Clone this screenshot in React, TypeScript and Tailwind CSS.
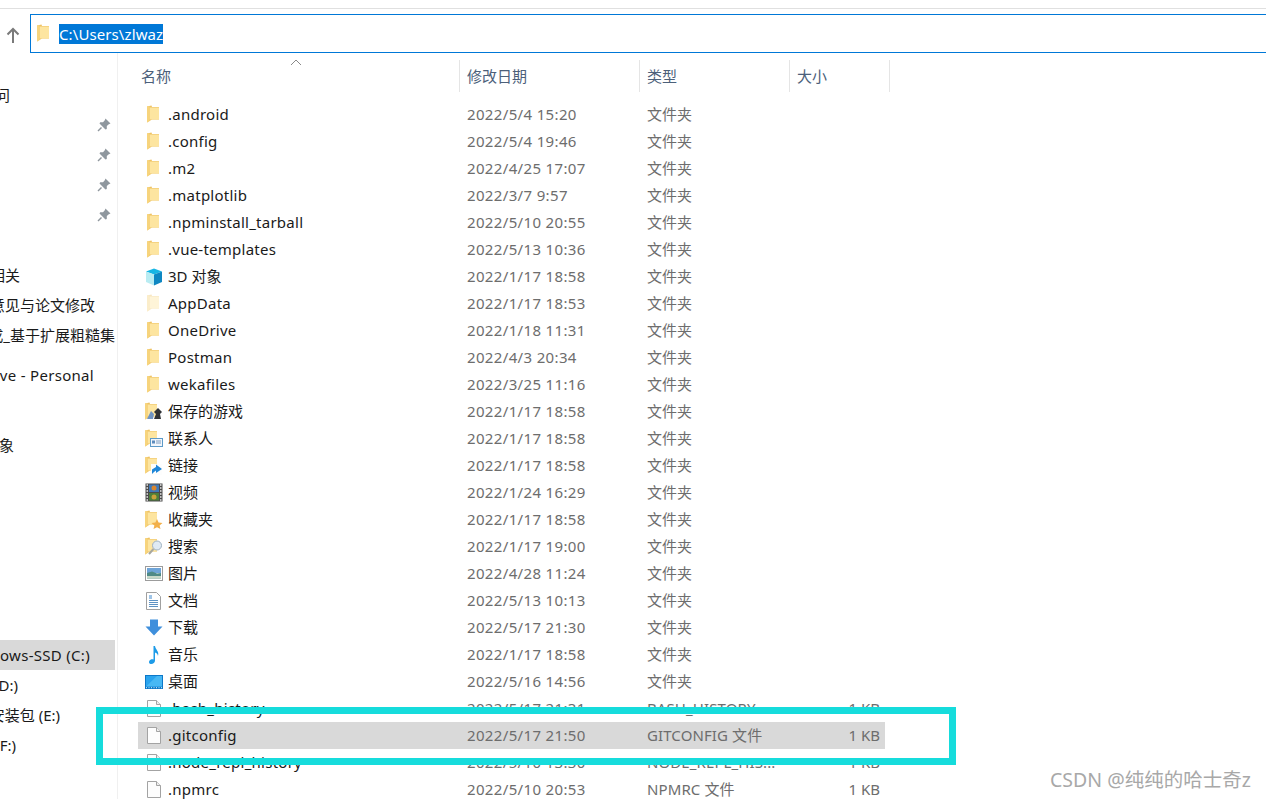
import React from 'react';

const FONT = "font-['Noto_Sans','Noto_Sans_CJK_SC',sans-serif]";

const Folder: React.FC<{ faded?: boolean }> = ({ faded }) => (
  <svg width="14" height="18" viewBox="1 0 14 18" className={`-mt-[1px] ${faded ? 'opacity-40' : ''}`}>
    <path d="M1 1.5 L5.5 0.5 L6 2 L13 2 L13 14.5 L6 14.5 L1 17.5 Z" fill="#eec263" />
    <path d="M3.5 2.5 L13 2.5 L13 14.5 L3.5 14.5 Z" fill="#fde5a0" />
    <path d="M1 1.5 L3.5 1 L3.5 16 L1 17.5 Z" fill="#f7d47c" />
  </svg>
);

const Overlay: React.FC<{ children: React.ReactNode }> = ({ children }) => (
  <span className="relative block w-[18px] h-[18px]">
    <span className="absolute left-0 top-0">
      <Folder />
    </span>
    <svg width="18" height="18" viewBox="0 0 18 18" className="absolute left-0 top-0">
      {children}
    </svg>
  </span>
);

const FileIcon = () => (
  <svg width="16" height="19" viewBox="0 0 16 19">
    <path d="M1.5 1.5 H10.5 L14.5 5.5 V17.5 H1.5 Z" fill="#fdfdfd" stroke="#a3a3a3" />
    <path d="M10.5 1.5 V5.5 H14.5" fill="#eee" stroke="#a3a3a3" />
  </svg>
);

const Icons: Record<string, React.ReactNode> = {
  folder: <Folder />,
  faded: <Folder faded />,
  file: <FileIcon />,
  cube: (
    <svg width="18" height="18" viewBox="0 0 18 18">
      <path d="M9 0.5 L17 3.5 L9 6.5 L1 3.5 Z" fill="#17b6e4" />
      <path d="M1 3.5 L9 6.5 V17.5 L1 14 Z" fill="#b9ecf2" />
      <path d="M9 6.5 L17 3.5 V14 L9 17.5 Z" fill="#0e87c2" />
    </svg>
  ),
  game: (
    <Overlay>
      <path d="M6 8 L2 16 H8 L9 11 Z" fill="#6f94c4" />
      <path d="M13 5 L17 9 L15 11 L16 16 H9 L11 11 L9 9 Z" fill="#2f3236" />
    </Overlay>
  ),
  contact: (
    <Overlay>
      <rect x="5.5" y="8.5" width="12" height="8" fill="#f2f6fb" stroke="#5d9ac8" />
      <rect x="7" y="10.5" width="3" height="3" fill="#5d8bbd" />
      <path d="M11 11 H16 M11 13 H16" stroke="#7d9cc0" />
    </Overlay>
  ),
  link: (
    <Overlay>
      <rect x="6" y="7" width="11" height="11" fill="#fdfdfd" />
      <path d="M7 17 V12.5 L11 10 V7.5 L17 12 L11 16 V13.5 L9 15 Z" fill="#1e86d8" />
    </Overlay>
  ),
  film: (
    <svg width="18" height="19" viewBox="0 0 18 19">
      <rect x="0.5" y="0.5" width="17" height="18" fill="#4a4a4a" />
      <rect x="4" y="1.5" width="10" height="7.5" fill="#3f78b8" />
      <rect x="4" y="10" width="10" height="7.5" fill="#4d7e3a" />
      <circle cx="9" cy="5" r="2.5" fill="#d9862e" />
      <circle cx="9" cy="14" r="2.5" fill="#c9a13a" />
      <path
        d="M1.5 2 H3 M1.5 5 H3 M1.5 8 H3 M1.5 11 H3 M1.5 14 H3 M1.5 17 H3 M15 2 H16.5 M15 5 H16.5 M15 8 H16.5 M15 11 H16.5 M15 14 H16.5 M15 17 H16.5"
        stroke="#e8e8e8"
        strokeWidth="1.5"
      />
    </svg>
  ),
  star: (
    <Overlay>
      <path
        d="M12 8 L13.6 11.6 L17.5 12 L14.6 14.5 L15.5 18 L12 16.2 L8.5 18 L9.4 14.5 L6.5 12 L10.4 11.6 Z"
        fill="#f2b04a"
      />
    </Overlay>
  ),
  search: (
    <Overlay>
      <circle cx="12" cy="7.5" r="4.5" fill="#dfeaf3" stroke="#9fb2c2" />
      <path d="M8.5 11 L4 16" stroke="#a8a8a0" strokeWidth="2" />
    </Overlay>
  ),
  picture: (
    <svg width="18" height="15" viewBox="0 0 18 15">
      <rect x="0.5" y="0.5" width="17" height="14" fill="#fff" stroke="#9c9c9c" />
      <rect x="2" y="2" width="14" height="5" fill="#6ea4d8" />
      <path d="M2 7 L7 5.5 L12 7.5 L16 7 V12.5 H2 Z" fill="#4f8a86" />
      <path d="M2 10 H16 V12.5 H2 Z" fill="#c8d8c8" />
    </svg>
  ),
  doc: (
    <svg width="15" height="18" viewBox="0 0 15 18">
      <path d="M0.5 0.5 H10.5 L14.5 4.5 V17.5 H0.5 Z" fill="#fff" stroke="#a0a0a0" />
      <path d="M3 4 H6 M3 6 H6" stroke="#3e8ad0" />
      <path d="M3 8.5 H12 M3 10.5 H12 M3 12.5 H12 M3 14.5 H12" stroke="#5f93c4" />
    </svg>
  ),
  download: (
    <svg width="18" height="17" viewBox="0 0 18 17">
      <path d="M5 0.5 H13 V7.5 H17.5 L9 16.5 L0.5 7.5 H5 Z" fill="#3f8fdc" />
    </svg>
  ),
  music: (
    <svg width="14" height="20" viewBox="0 0 14 20">
      <path d="M6.5 1 H8 C8.5 5 12.5 6 11 11 C10.5 8.5 9.5 8 8 7.5 V15.5 C8 18 5.5 19.5 3.5 19 C1.5 18.5 1.5 16 3.5 14.8 C4.5 14.2 5.5 14.2 6.5 14.6 Z" fill="#1d9be8" />
    </svg>
  ),
  desktop: (
    <svg width="18" height="14" viewBox="0 0 18 14">
      <rect width="18" height="14" fill="#0d78c8" />
      <path d="M1 1 H17 V11.5 H1 Z" fill="#2aa4ee" />
      <path d="M1 11.5 L12 1 H17 V11.5 Z" fill="#48b8f4" />
      <path d="M1 12.7 H17" stroke="#d8eefb" strokeDasharray="1 1.5" />
    </svg>
  ),
};

type Row = { icon: string; name: string; date: string; kind: string; size?: string; selected?: boolean };

const FOLDER_KIND = '文件夹';

const rows: Row[] = [
  { icon: 'folder', name: '.android', date: '2022/5/4 15:20', kind: FOLDER_KIND },
  { icon: 'folder', name: '.config', date: '2022/5/4 19:46', kind: FOLDER_KIND },
  { icon: 'folder', name: '.m2', date: '2022/4/25 17:07', kind: FOLDER_KIND },
  { icon: 'folder', name: '.matplotlib', date: '2022/3/7 9:57', kind: FOLDER_KIND },
  { icon: 'folder', name: '.npminstall_tarball', date: '2022/5/10 20:55', kind: FOLDER_KIND },
  { icon: 'folder', name: '.vue-templates', date: '2022/5/13 10:36', kind: FOLDER_KIND },
  { icon: 'cube', name: '3D 对象', date: '2022/1/17 18:58', kind: FOLDER_KIND },
  { icon: 'faded', name: 'AppData', date: '2022/1/17 18:53', kind: FOLDER_KIND },
  { icon: 'folder', name: 'OneDrive', date: '2022/1/18 11:31', kind: FOLDER_KIND },
  { icon: 'folder', name: 'Postman', date: '2022/4/3 20:34', kind: FOLDER_KIND },
  { icon: 'folder', name: 'wekafiles', date: '2022/3/25 11:16', kind: FOLDER_KIND },
  { icon: 'game', name: '保存的游戏', date: '2022/1/17 18:58', kind: FOLDER_KIND },
  { icon: 'contact', name: '联系人', date: '2022/1/17 18:58', kind: FOLDER_KIND },
  { icon: 'link', name: '链接', date: '2022/1/17 18:58', kind: FOLDER_KIND },
  { icon: 'film', name: '视频', date: '2022/1/24 16:29', kind: FOLDER_KIND },
  { icon: 'star', name: '收藏夹', date: '2022/1/17 18:58', kind: FOLDER_KIND },
  { icon: 'search', name: '搜索', date: '2022/1/17 19:00', kind: FOLDER_KIND },
  { icon: 'picture', name: '图片', date: '2022/4/28 11:24', kind: FOLDER_KIND },
  { icon: 'doc', name: '文档', date: '2022/5/13 10:13', kind: FOLDER_KIND },
  { icon: 'download', name: '下载', date: '2022/5/17 21:30', kind: FOLDER_KIND },
  { icon: 'music', name: '音乐', date: '2022/1/17 18:58', kind: FOLDER_KIND },
  { icon: 'desktop', name: '桌面', date: '2022/5/16 14:56', kind: FOLDER_KIND },
  { icon: 'file', name: '.bash_history', date: '2022/5/17 21:31', kind: 'BASH_HISTORY...', size: '1 KB' },
  { icon: 'file', name: '.gitconfig', date: '2022/5/17 21:50', kind: 'GITCONFIG 文件', size: '1 KB', selected: true },
  { icon: 'file', name: '.node_repl_history', date: '2022/5/10 13:30', kind: 'NODE_REPL_HIS...', size: '1 KB' },
  { icon: 'file', name: '.npmrc', date: '2022/5/10 20:53', kind: 'NPMRC 文件', size: '1 KB' },
];

const Pin = () => (
  <svg width="16" height="16" viewBox="0 0 16 16">
    <path d="M9.5 1.5 L14.5 6.5 L12.8 7.2 L10.8 9 L10.8 12 L9.5 12.5 L3.5 6.5 L4.2 5.2 L7 5.2 L8.8 3.2 Z" fill="#8f979e" />
    <path d="M5.5 10.5 L2 14" stroke="#8f979e" strokeWidth="1.5" />
  </svg>
);

type NavItem = { text?: string; pin?: boolean; selected?: boolean; pr?: string; gap?: string };

const nav: NavItem[] = [
  { text: '访问', pr: 'pr-[107px]' },
  { pin: true },
  { pin: true },
  { pin: true },
  { pin: true },
  { gap: 'h-[30px]' },
  { text: '相关', pr: 'pr-[97px]' },
  { text: '意见与论文修改', pr: 'pr-[22px]' },
  { text: '成_基于扩展粗糙集', pr: 'pr-[2px]' },
  { gap: 'h-[10px]' },
  { text: 'OneDrive - Personal', pr: 'pr-[23px] tracking-[0.3px]' },
  { gap: 'h-[40px]' },
  { text: '3D 对象', pr: 'pr-[103px]' },
  { gap: 'h-[180px]' },
  { text: 'Windows-SSD (C:)', selected: true, pr: 'pr-[25px] tracking-[0.3px] bg-[#d9d9d9] mr-[2px]' },
  { text: '新加卷 (D:)', pr: 'pr-[99px]' },
  { text: '安装包 (E:)', pr: 'pr-[57px]' },
  { text: '本地磁盘 (F:)', pr: 'pr-[101px]' },
];

const Sidebar = () => (
  <aside className="w-[118px] shrink-0 border-r border-[#f0f0f0] pt-[27px] overflow-hidden">
    {nav.map((item, i) => {
      if (item.gap) return <div key={i} className={item.gap} />;
      if (item.pin)
        return (
          <div key={i} className="h-[30px] flex items-center justify-end pr-[5px]">
            <Pin />
          </div>
        );
      return (
        <div
          key={i}
          className={`h-[30px] flex items-center justify-end whitespace-nowrap text-[15px] text-[#1a1a1a] ${item.pr}`}
        >
          {item.text}
        </div>
      );
    })}
  </aside>
);

const columns = [
  { label: '名称', width: 'w-[328px]', pl: 'pl-[9px]' },
  { label: '修改日期', width: 'w-[180px]', pl: 'pl-[7px]' },
  { label: '类型', width: 'w-[150px]', pl: 'pl-[7px]' },
  { label: '大小', width: 'w-[100px]', pl: 'pl-[7px]' },
];

// latin text runs a bit narrower here than in the screenshot, CJK does not
const latin = (s: string) => (/^[\x00-\x7f]+$/.test(s) ? 'tracking-[0.25px]' : '');

const FileList = () => (
  <main className="flex-1 min-w-0 pl-[14px]">
    <div className="relative flex h-[32px] mt-[7px] text-[15px] text-[#4c607a]">
      <svg width="12" height="7" viewBox="0 0 12 7" className="absolute left-[158px] -top-[1px]">
        <path d="M1 6 L6 1 L11 6" fill="none" stroke="#8a8a8a" />
      </svg>
      {columns.map((c) => (
        <div key={c.label} className={`${c.width} ${c.pl} h-full flex items-center border-r border-[#e5e5e5]`}>
          {c.label}
        </div>
      ))}
    </div>
    <div className="mt-[9px] w-[747px] ml-[6px]">
      {rows.map((r) => (
        <div
          key={r.name}
          className={`flex items-center h-[27px] whitespace-nowrap text-[15px] ${r.selected ? 'bg-[#d9d9d9]' : ''}`}
        >
          <span className="w-[30px] flex justify-center shrink-0 pl-[1px]">{Icons[r.icon]}</span>
          <span className={`w-[299px] text-[#1a1a1a] ${latin(r.name)}`}>{r.name}</span>
          <span className="w-[180px] text-[#6d6d6d] tracking-[0.35px]">{r.date}</span>
          <span className={`w-[190px] text-[#6d6d6d] ${r.kind === FOLDER_KIND ? '' : 'tracking-[0.1px]'}`}>{r.kind}</span>
          <span className="w-[43px] text-right text-[#6d6d6d]">{r.size}</span>
        </div>
      ))}
    </div>
  </main>
);

export default function App() {
  return (
    <div className={`relative w-[1266px] h-[799px] overflow-hidden bg-white flex flex-col ${FONT}`}>
      <div className="h-[9px] shrink-0 border-b border-[#e0e0e0]" />
      <div className="h-[39px] mt-[5px] shrink-0 flex items-center">
        <svg width="14" height="17" viewBox="0 0 14 17" className="ml-[6px] mr-[10px] mt-[4px] shrink-0">
          <path d="M7 16 V2 M1.5 7.5 L7 2 L12.5 7.5" fill="none" stroke="#7a7a7a" strokeWidth="2" />
        </svg>
        <div className="flex-1 h-full border border-[#0078d7] border-r-0 flex items-center pl-[6px] gap-[8px]">
          <Folder />
          <span className="bg-[#0078d7] text-white text-[15px] leading-[20px] tracking-[0.1px]">C:\Users\zlwaz</span>
        </div>
      </div>
      <div className="flex flex-1 min-h-0">
        <Sidebar />
        <FileList />
      </div>
      <div className="absolute left-[96px] top-[707px] w-[860px] h-[58px] border-[7px] border-[#16dcdc]" />
      <div className="absolute left-[1050px] top-[767px] text-[19.5px] leading-[26px] text-[#a8a8a8] whitespace-nowrap">
        CSDN @纯纯的哈士奇z
      </div>
    </div>
  );
}
